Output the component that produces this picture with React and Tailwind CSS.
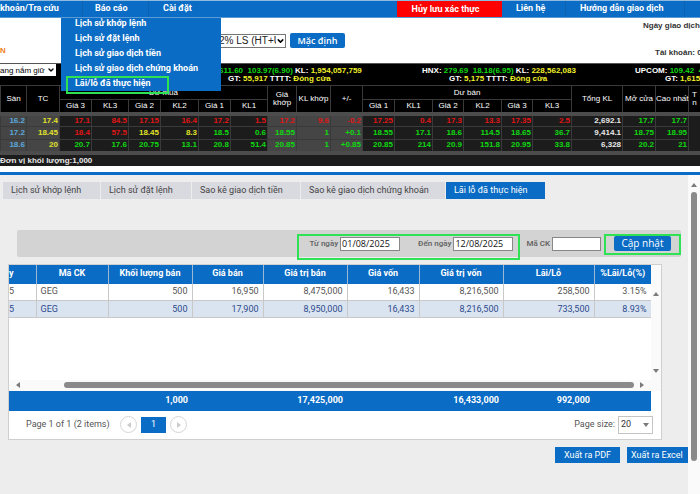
import { useState } from 'react';
import { ChevronDown } from 'lucide-react';

const reports = [
  'Lịch sử khớp lệnh',
  'Lịch sử đặt lệnh',
  'Lịch sử giao dịch tiền',
  'Lịch sử giao dịch chứng khoán',
];

const tabs = [
  { name: 'Lịch sử khớp lệnh', style: 'w-[97px]' },
  { name: 'Lịch sử đặt lệnh', style: 'w-[90px]' },
  { name: 'Sao kê giao dịch tiền', style: 'w-[108px]' },
  { name: 'Sao kê giao dịch chứng khoán', style: 'w-[144px]' },
  { name: 'Lãi lỗ đã thực hiện', style: 'w-[99px]' },
];

const boardCols = [26, 33, 32, 37, 32, 38, 32, 37, 29, 34, 32, 32, 38, 31, 38, 31, 39, 51, 33, 33, 12];

// r = down, g = up, y = reference, b = floor, w = neutral
const boardRows = [
  ['b16.2', 'y17.4', 'r17.1', 'r84.5', 'r17.15', 'r16.4', 'r17.2', 'r1.5', 'r17.2', 'r9.6', 'r-0.2', 'r17.25', 'r0.4', 'r17.3', 'r13.3', 'r17.35', 'r2.5', 'w2,692.1', 'g17.7', 'g17.7'],
  ['b17.2', 'y18.45', 'r18.4', 'r57.5', 'y18.45', 'y8.3', 'g18.5', 'g0.6', 'g18.55', 'g1', 'g+0.1', 'g18.55', 'g17.1', 'g18.6', 'g114.5', 'g18.65', 'g36.7', 'w9,414.1', 'g18.75', 'g18.95'],
  ['b18.6', 'y20', 'g20.7', 'g17.6', 'g20.75', 'g13.1', 'g20.8', 'g51.4', 'g20.85', 'g1', 'g+0.85', 'g20.85', 'g214', 'g20.9', 'g151.8', 'g20.95', 'g33.8', 'w6,328', 'g20.2', 'g21'],
];

const tones = {
  r: 'text-[#e01515]',
  g: 'text-[#10d810]',
  y: 'text-[#e2e22a]',
  b: 'text-[#5aa9dc]',
  w: 'text-[#e8e8e8]',
};

const gridCols = [27, 72, 84, 71, 84, 72, 84, 91, 57];
const gridHead = ['y', 'Mã CK', 'Khối lượng bán', 'Giá bán', 'Giá trị bán', 'Giá vốn', 'Giá trị vốn', 'Lãi/Lỗ', '%Lãi/Lỗ(%)'];
const gridRows = [
  ['5', 'GEG', '500', '16,950', '8,475,000', '16,433', '8,216,500', '258,500', '3.15%'],
  ['5', 'GEG', '500', '17,900', '8,950,000', '16,433', '8,216,500', '733,500', '8.93%'],
];
const gridTotals = ['', '', '1,000', '', '17,425,000', '', '16,433,000', '992,000', ''];

function Cols({ widths }) {
  return (
    <colgroup>
      {widths.map((w, i) => (
        <col key={i} style={{ width: w }} />
      ))}
    </colgroup>
  );
}

function Arrow({ d, className = 'text-[#7a7a7a]' }) {
  return (
    <svg viewBox="0 0 6 6" className={`w-[6px] h-[6px] shrink-0 ${className}`} aria-hidden="true">
      <path d={d} fill="currentColor" />
    </svg>
  );
}

const UP = 'M0 5L3 1L6 5Z';
const DOWN = 'M0 1L3 5L6 1Z';
const LEFT = 'M5 0L1 3L5 6Z';
const RIGHT = 'M1 0L5 3L1 6Z';

function TopNav() {
  return (
    <nav className="relative z-10 flex h-[18px] items-stretch border-t border-b border-t-[#8fb9df] border-b-[#5b9bd5] bg-[#0a6cc4] text-[9px] leading-[15px] font-bold text-white whitespace-nowrap">
      <a href="#tra-cuu" className="w-[82px]">khoản/Tra cứu</a>
      <div className="relative w-[67px] border-x border-[#0d62b0] pl-3">
        <a href="#bao-cao">Báo cáo</a>
        <div className="absolute top-[17px] -left-[22px] w-[160px] bg-[#0a6cc4]">
          {reports.map((name) => (
            <a key={name} href="#report" className="block h-[15px] pl-[14px] leading-[11px]">{name}</a>
          ))}
          <a href="#lai-lo" className="-mt-[2px] -mb-[3px] ml-[5px] block h-[18px] w-[103px] border-2 border-[#2ee254] pl-[7px] leading-[11px]">
            Lãi/lỗ đã thực hiện
          </a>
        </div>
      </div>
      <a href="#cai-dat" className="pl-[14px]">Cài đặt</a>
      <div className="ml-auto flex">
        <button type="button" className="w-[105px] bg-[#fe0000] pr-2">Hủy lưu xác thực</button>
        <a href="#lien-he" className="w-[64px] border-r border-[#0d62b0] pl-[14px]">Liên hệ</a>
        <a href="#huong-dan" className="w-[119px] border-r border-[#0d62b0] pl-[14px]">Hướng dẫn giao dịch</a>
        <div className="w-[15px]" />
      </div>
    </nav>
  );
}

function Header() {
  return (
    <header className="flex h-[45px] justify-between bg-white font-['Liberation_Sans',sans-serif]">
      <div className="flex items-start">
        <span className="w-[200px] pt-[28px] text-[8px] leading-[10px] font-bold text-[#f08020]">N</span>
        <div className="relative mt-4 w-[86px]">
          <select aria-label="Lãi suất" className="block h-[14px] w-full appearance-none border border-[#767676] bg-white pl-[18px] text-[10px] leading-[12px] text-[#222]">
            <option>2% LS (HT+U</option>
          </select>
          <span className="pointer-events-none absolute top-px right-px bg-white">
            <ChevronDown className="h-3 w-[9px] text-black" strokeWidth={4} />
          </span>
        </div>
        <button type="button" className="mt-[15px] ml-1 h-[15px] w-[55px] rounded-[2px] bg-[#0a6cc4] font-['Open_Sans',sans-serif] text-[9px] leading-[15px] font-semibold text-white">
          Mặc định
        </button>
      </div>
      <div className="flex w-[57px] flex-col justify-between pt-[2px] pb-[5px] text-[8px] leading-[11px] font-bold whitespace-nowrap text-[#333]">
        <span>Ngày giao dịch</span>
        <span className="pl-3">Tài khoản: 0</span>
      </div>
    </header>
  );
}

function Index({ name, value, change, volume, total, width, indent }) {
  return (
    <div className={`shrink-0 text-white ${width}`}>
      <div>
        {name && `${name}: `}
        <span className="text-[#10d810]">{value}&nbsp; {change}</span>
        {volume && <> KL: <span className="text-[#f0f02a]">{volume}</span></>}
      </div>
      <div className={indent}>
        GT: <span className="text-[#f0f02a]">{total}</span>
        {volume && <> TTTT: <span className="text-[#f0f02a]">Đóng cửa</span></>}
      </div>
    </div>
  );
}

function PriceBoard() {
  const th = 'border border-[#3a3a3a] p-0 font-normal text-white';
  return (
    <section className="bg-black font-['Liberation_Sans',sans-serif] text-[8px] leading-[8px] font-bold text-[#e8e8e8]">
      <div className="flex h-[22px] overflow-hidden border-t border-[#555] whitespace-nowrap">
        <div className="relative w-[56px] shrink-0">
          <select aria-label="Danh mục" className="block h-3 w-full appearance-none bg-white text-[8px] leading-[11px] font-normal text-black">
            <option>ang nắm giữ</option>
          </select>
          <ChevronDown className="pointer-events-none absolute top-px right-px h-[10px] w-2 text-black" strokeWidth={4} />
        </div>
        <div className="flex grow justify-between pt-[3px] pl-[163px]">
          <Index value="611.60" change="103.97(6.90)" volume="1,954,057,759" total="55,917" width="w-[203px]" indent="pl-[9px]" />
          <Index name="HNX" value="279.69" change="18.18(6.95)" volume="228,562,083" total="5,175" width="w-[213px]" indent="pl-[27px]" />
          <Index name="UPCOM" value="109.42" change="4" total="1,615" width="w-[65px]" indent="pl-[30px]" />
        </div>
      </div>

      <table className="w-full table-fixed border-collapse whitespace-nowrap">
        <Cols widths={boardCols} />
        <thead>
          <tr className="h-[14px]">
            <th rowSpan={2} className={th}>Sàn</th>
            <th rowSpan={2} className={th}>TC</th>
            <th colSpan={6} className={th}>Dư mua</th>
            <th rowSpan={2} className={th}>Giá<br />khớp</th>
            <th rowSpan={2} className={th}>KL khớp</th>
            <th rowSpan={2} className={th}>+/-</th>
            <th colSpan={6} className={th}>Dư bán</th>
            <th rowSpan={2} className={th}>Tổng KL</th>
            <th rowSpan={2} className={th}>Mở cửa</th>
            <th rowSpan={2} className={th}>Cao nhất</th>
            <th rowSpan={2} className={th}>T<br />n</th>
          </tr>
          <tr className="h-[14px]">
            {['Giá 3', 'KL3', 'Giá 2', 'KL2', 'Giá 1', 'KL1', 'Giá 1', 'KL1', 'Giá 2', 'KL2', 'Giá 3', 'KL3'].map((label, i) => (
              <th key={i} className={th}>{label}</th>
            ))}
          </tr>
        </thead>
        <tbody className="border-y-4 border-[#4c4c4c]">
          {boardRows.map((row, r) => (
            <tr key={r} className="h-[13px]">
              {row.map((cell, i) => (
                <td
                  key={i}
                  className={`border-x border-b border-[#3a3a3a] p-0 pr-px text-right ${tones[cell[0]]} ${i < 2 || (i > 7 && i < 11) ? 'bg-[#454545]' : 'bg-[#1c1c1c]'}`}
                >
                  {cell.slice(1)}
                </td>
              ))}
              <td className="bg-[#1c1c1c] p-0" />
            </tr>
          ))}
        </tbody>
      </table>
      <div className="h-[11px] bg-[#1c1c1c] leading-[11px]">Đơn vị khối lượng:1,000</div>
    </section>
  );
}

function Filters() {
  const [from, setFrom] = useState('01/08/2025');
  const [to, setTo] = useState('12/08/2025');
  const [code, setCode] = useState('');
  const input = "h-[14px] border border-[#888] bg-white px-px font-['Open_Sans',sans-serif] text-[9px] leading-[12px] font-normal text-[#111]";

  return (
    <form
      onSubmit={(e) => e.preventDefault()}
      className="mt-[31px] mr-[7px] ml-[17px] flex h-[27px] items-start justify-end rounded-[2px] bg-[#d3d3d3] pt-1 text-[8px] font-semibold whitespace-nowrap text-[#666]"
    >
      <div className="flex h-[26px] w-[223px] items-start justify-between border-2 border-[#2ee254] pt-px pr-[5px] pl-[10px]">
        <div className="flex items-center gap-[2px]">
          <label htmlFor="from">Từ ngày</label>
          <input id="from" value={from} onChange={(e) => setFrom(e.target.value)} className={`w-[60px] ${input}`} />
        </div>
        <div className="flex items-center gap-[2px]">
          <label htmlFor="to">Đến ngày</label>
          <input id="to" value={to} onChange={(e) => setTo(e.target.value)} className={`w-[60px] ${input}`} />
        </div>
      </div>
      <div className="mr-[3px] ml-[6px] flex items-center gap-[2px] pt-[3px]">
        <label htmlFor="code">Mã CK</label>
        <input id="code" value={code} onChange={(e) => setCode(e.target.value)} className={`w-[49px] ${input}`} />
      </div>
      <div className="flex h-[21px] w-[77px] justify-center border-2 border-[#2ee254]">
        <button type="submit" className="h-[15px] w-[57px] rounded-[2px] bg-[#0a6cc4] font-['Open_Sans',sans-serif] text-[10px] leading-[15px] font-normal text-white">
          Cập nhật
        </button>
      </div>
    </form>
  );
}

function ResultGrid() {
  return (
    <div className="mt-[7px] mr-[26px] ml-2 border border-[#cfcfcf] bg-white text-[9px] whitespace-nowrap text-[#555]">
      <div className="flex h-[115px]">
        <div className="min-w-0 grow">
          <table className="w-full table-fixed border-collapse">
            <Cols widths={gridCols} />
            <thead>
              <tr className="h-[19px] bg-[#0a6cc4] text-white">
                {gridHead.map((label, i) => (
                  <th key={i} className={`border-[#9cb8d4] p-0 font-bold ${i ? 'border-l' : 'text-left'}`}>{label}</th>
                ))}
              </tr>
            </thead>
            <tbody>
              {gridRows.map((row, r) => (
                <tr key={r} className={`h-[17px] border-b border-[#c8c8c8] ${r ? 'bg-[#dae4f0] text-[#2c4a8c]' : ''}`}>
                  {row.map((cell, i) => (
                    <td
                      key={i}
                      className={`border-r border-[#c8c8c8] p-0 leading-[15px] ${i === 0 ? '' : i === 1 ? 'pl-1' : 'pr-1 text-right'}`}
                    >
                      {cell}
                    </td>
                  ))}
                </tr>
              ))}
            </tbody>
          </table>
        </div>
        <div className="flex w-[10px] shrink-0 flex-col items-center justify-between bg-[#fafafa] pt-[26px] pb-[6px]">
          <Arrow d={UP} />
          <Arrow d={DOWN} />
        </div>
      </div>
      <div className="flex h-[11px] items-center bg-[#fafafa] pr-[16px] pl-[6px]">
        <Arrow d={LEFT} />
        <div className="mr-[5px] ml-[43px] h-[6px] grow rounded-full bg-[#8a8a8a]" />
        <Arrow d={RIGHT} />
      </div>
      <div className="pr-[10px]">
        <table className="w-full table-fixed border-collapse bg-[#0a6cc4] text-white">
          <Cols widths={gridCols} />
          <tbody>
            <tr className="h-5">
              {gridTotals.map((cell, i) => (
                <td key={i} className="p-0 pr-1 text-right font-bold">{cell}</td>
              ))}
            </tr>
          </tbody>
        </table>
      </div>
      <div className="flex h-[28px] items-center pr-2 pl-[17px]">
        <span className="w-[78px]">Page 1 of 1 (2 items)</span>
        <button type="button" aria-label="Previous page" className="ml-4 flex size-[17px] items-center justify-center rounded-full border border-[#d5d5d5]">
          <Arrow d={LEFT} className="text-[#ccc]" />
        </button>
        <button type="button" className="mx-1 h-4 w-[25px] bg-[#0a6cc4] text-white">1</button>
        <button type="button" aria-label="Next page" className="flex size-[17px] items-center justify-center rounded-full border border-[#d5d5d5]">
          <Arrow d={RIGHT} className="text-[#ccc]" />
        </button>
        <label htmlFor="size" className="mr-[3px] ml-auto">Page size:</label>
        <div className="relative">
          <select id="size" className="block h-[18px] w-[35px] appearance-none border border-[#c4c4c4] bg-white pl-[2px] text-[9px] text-[#333]">
            <option>20</option>
          </select>
          <span className="pointer-events-none absolute top-[6px] right-1">
            <Arrow d={DOWN} />
          </span>
        </div>
      </div>
    </div>
  );
}

function App() {
  const [active, setActive] = useState(4);

  return (
    <div className="flex min-h-screen flex-col overflow-hidden bg-white font-[Roboto,sans-serif]">
      <TopNav />
      <Header />
      <PriceBoard />

      {/* Report panel */}
      <main className="mt-[6px] flex grow border-t-3 border-[#0a6cc4] bg-[#ededed]">
        <div className="min-w-0 grow overflow-hidden">
          <div className="flex gap-px pt-[7px] pl-[3px]">
            {tabs.map((tab, i) => (
              <button
                key={tab.name}
                type="button"
                onClick={() => setActive(i)}
                className={`h-[17px] pl-2 text-left text-[9px] leading-[17px] whitespace-nowrap ${tab.style} ${i === active ? 'bg-[#0a6cc4] text-white' : 'bg-[#d9d9e0] text-[#444]'}`}
              >
                {tab.name}
              </button>
            ))}
          </div>
          <Filters />
          <ResultGrid />
          <div className="mt-[7px] flex justify-end gap-[7px] text-[9px] leading-[16px] whitespace-nowrap text-white">
            <button type="button" className="h-4 w-[65px] bg-[#0a6cc4]">Xuất ra PDF</button>
            <button type="button" className="h-4 w-[61px] bg-[#0a6cc4] pl-1 text-left">Xuất ra Excel</button>
          </div>
        </div>
        <div className="flex w-3 shrink-0 flex-col items-center bg-[#fafafa] pt-[7px] pb-[33px]">
          <Arrow d={UP} />
          <div className="mt-1 w-[6px] grow rounded-full bg-[#8a8a8a]" />
        </div>
      </main>
    </div>
  );
}

export default App;
